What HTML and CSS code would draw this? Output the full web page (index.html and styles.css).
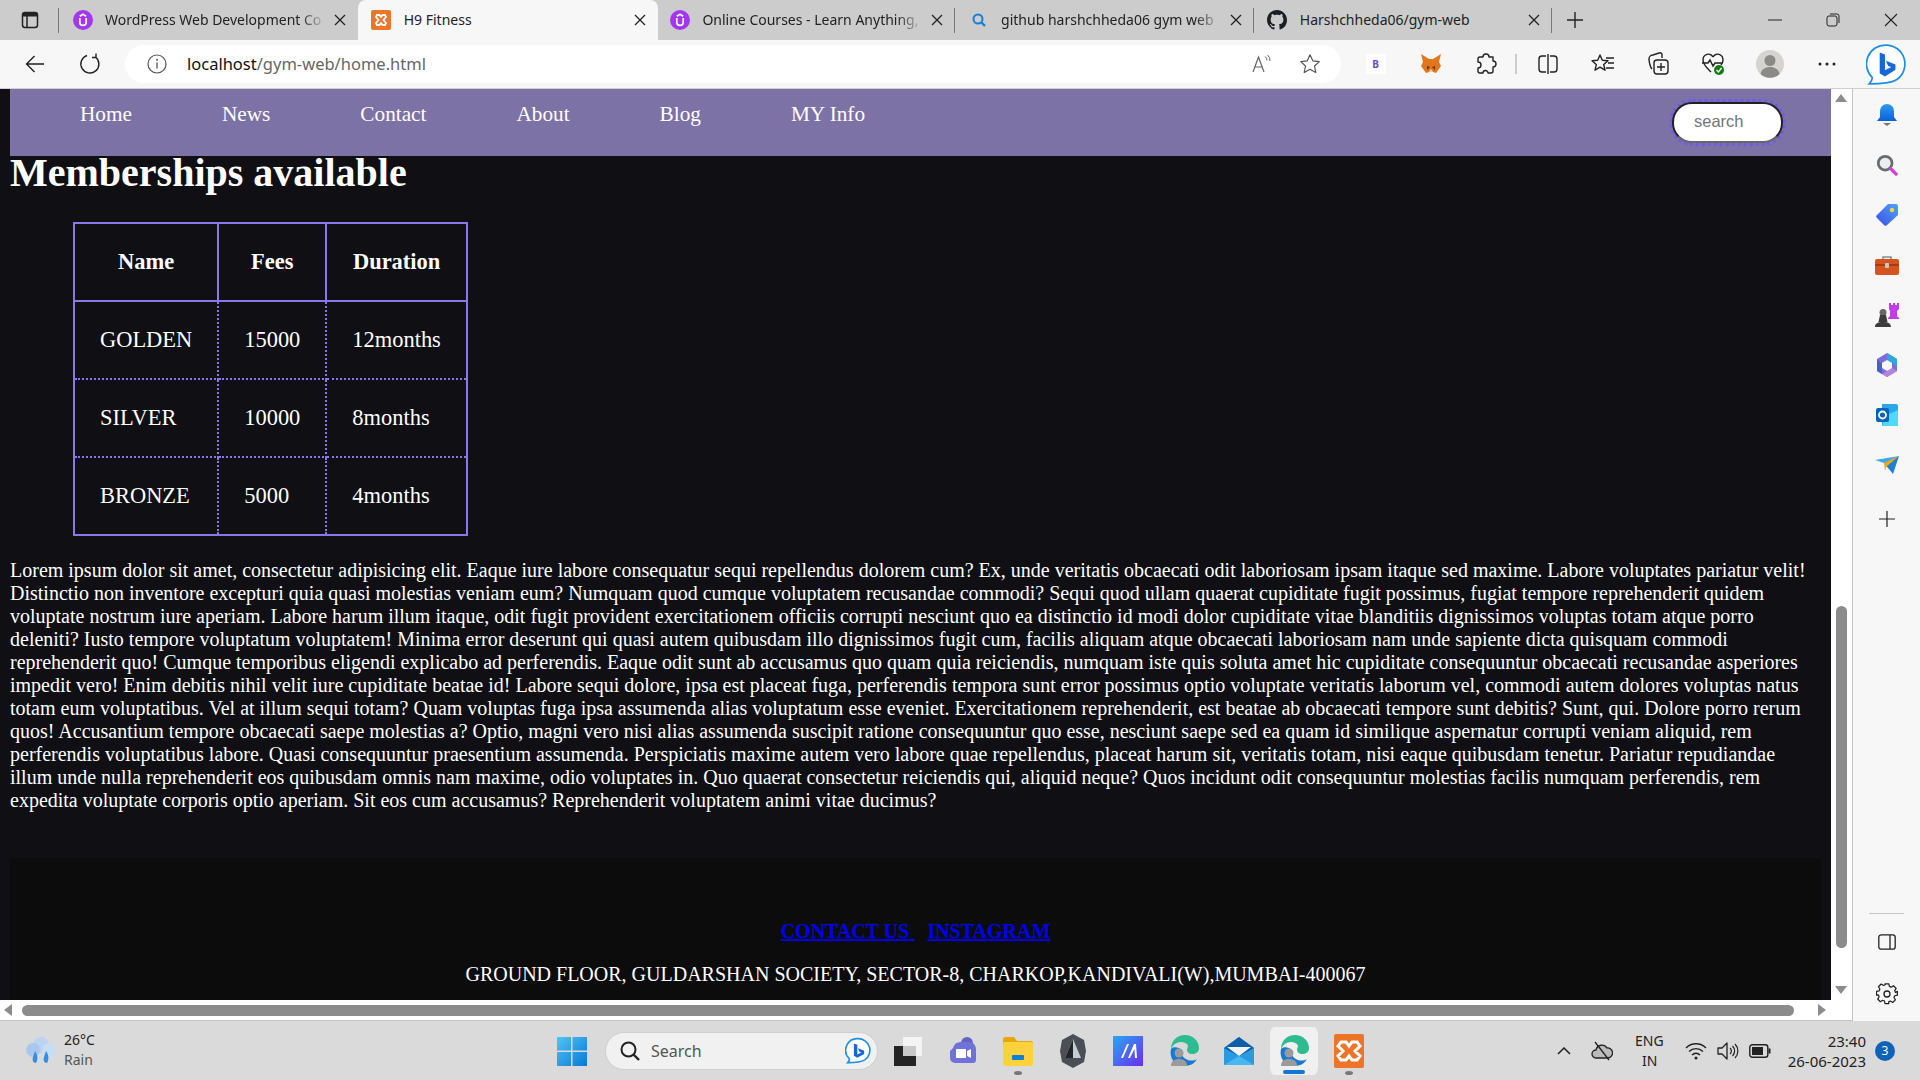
FILE: index.html
```html
<!DOCTYPE html>
<html lang="en">
<head>
    <meta charset="UTF-8">
    <title>H9 Fitness</title>
    <link rel="stylesheet" href="styles.css">
</head>
<body>
<div class="screen">

    <!-- tabs -->
    <div class="tabbar">
        <div class="tab-toggle">
            <svg width="18" height="18" viewBox="0 0 18 18"><rect x="1.500" y="1.500" width="15" height="15" rx="2.500" fill="none" stroke="#222" stroke-width="1.500"/><path d="M1.500 4a2.500 2.500 0 0 1 2.500-2.500h10a2.500 2.500 0 0 1 2.500 2.500v1.500h-15z" fill="#222"/><path d="M6 5v11" stroke="#222" stroke-width="1.500"/></svg>
        </div>
        <div class="tab">
            <svg class="favicon" viewBox="0 0 20 20"><circle cx="10" cy="10" r="10" fill="#a435f0"/><path d="M6.800 8v4.200a3.200 3.200 0 0 0 6.400 0V8M6.800 6.200L10 4.200l3.200 2" fill="none" stroke="#fff" stroke-width="1.700"/></svg>
            <span class="tab-title tab-fade">WordPress Web Development Co</span>
            <svg class="tab-close" viewBox="0 0 12 12"><path d="M1 1l10 10M11 1L1 11" stroke="#222" stroke-width="1.300"/></svg>
        </div>
        <div class="tab tab-active">
            <svg class="favicon" viewBox="0 0 20 20"><rect width="20" height="20" rx="2" fill="#ed7428"/><path d="M6 5h2.500L10 7l1.500-2H14l1 2-2.500 3 2.500 3-1 2h-2.500L10 13l-1.500 2H6l-1-2 2.500-3L5 7z" fill="none" stroke="#fff" stroke-width="1.800"/></svg>
            <span class="tab-title">H9 Fitness</span>
            <svg class="tab-close" viewBox="0 0 12 12"><path d="M1 1l10 10M11 1L1 11" stroke="#222" stroke-width="1.300"/></svg>
        </div>
        <div class="tab tab-sep">
            <svg class="favicon" viewBox="0 0 20 20"><circle cx="10" cy="10" r="10" fill="#a435f0"/><path d="M6.800 8v4.200a3.200 3.200 0 0 0 6.400 0V8M6.800 6.200L10 4.200l3.200 2" fill="none" stroke="#fff" stroke-width="1.700"/></svg>
            <span class="tab-title tab-fade">Online Courses - Learn Anything,</span>
            <svg class="tab-close" viewBox="0 0 12 12"><path d="M1 1l10 10M11 1L1 11" stroke="#222" stroke-width="1.300"/></svg>
        </div>
        <div class="tab tab-sep">
            <svg class="favicon" viewBox="0 0 20 20"><circle cx="9" cy="9" r="4.500" fill="none" stroke="#1a7fd4" stroke-width="2"/><path d="M12.500 12.500L16 16" stroke="#1a7fd4" stroke-width="2.400"/></svg>
            <span class="tab-title tab-fade">github harshchheda06 gym web</span>
            <svg class="tab-close" viewBox="0 0 12 12"><path d="M1 1l10 10M11 1L1 11" stroke="#222" stroke-width="1.300"/></svg>
        </div>
        <div class="tab tab-sep">
            <svg class="favicon" viewBox="0 0 16 16"><path fill="#1b1f23" d="M8 0C3.580 0 0 3.580 0 8c0 3.540 2.290 6.530 5.470 7.590.4.070.55-.17.55-.38 0-.19-.01-.82-.01-1.490-2.010.37-2.530-.49-2.690-.94-.09-.23-.48-.94-.82-1.130-.28-.15-.68-.52-.01-.53.63-.01 1.080.58 1.230.82.720 1.210 1.870.870 2.330.660.070-.520.280-.870.510-1.070-1.780-.200-3.640-.890-3.640-3.950 0-.870.310-1.590.820-2.150-.080-.200-.360-1.020.080-2.120 0 0 .670-.210 2.200.820.640-.180 1.320-.270 2-.270s1.360.090 2 .270c1.530-1.040 2.200-.820 2.200-.820.440 1.100.160 1.920.080 2.120.510.560.820 1.270.820 2.150 0 3.070-1.870 3.750-3.650 3.950.290.250.540.730.540 1.480 0 1.070-.010 1.930-.010 2.200 0 .210.150.460.550.380A8.010 8.010 0 0 0 16 8c0-4.420-3.580-8-8-8z"/></svg>
            <span class="tab-title">Harshchheda06/gym-web</span>
            <svg class="tab-close" viewBox="0 0 12 12"><path d="M1 1l10 10M11 1L1 11" stroke="#222" stroke-width="1.300"/></svg>
        </div>
        <div class="tab-new">
            <svg width="18" height="18" viewBox="0 0 18 18"><path d="M9 1v16M1 9h16" stroke="#222" stroke-width="1.400"/></svg>
        </div>
        <div class="win-controls">
            <svg width="14" height="14" viewBox="0 0 14 14"><path d="M0 7h14" stroke="#222" stroke-width="1"/></svg>
            <svg width="14" height="14" viewBox="0 0 14 14"><rect x="1" y="3" width="10" height="10" rx="2" fill="none" stroke="#222"/><path d="M4 1h7a2 2 0 0 1 2 2v7" fill="none" stroke="#222"/></svg>
            <svg width="14" height="14" viewBox="0 0 14 14"><path d="M1 1l12 12M13 1L1 13" stroke="#222" stroke-width="1.100"/></svg>
        </div>
    </div>

    <!-- address bar -->
    <div class="toolbar">
        <div class="nav-btn">
            <svg width="20" height="20" viewBox="0 0 20 20"><path d="M19 10H1.500M9.500 2L1.500 10l8 8" fill="none" stroke="#222" stroke-width="1.400"/></svg>
        </div>
        <div class="nav-btn">
            <svg width="22" height="22" viewBox="0 0 22 22"><path d="M16.500 4A9 9 0 1 1 8 2.500M17 .5V4.500h-4" fill="none" stroke="#222" stroke-width="1.400"/></svg>
        </div>
        <div class="address">
            <svg class="info" width="20" height="20" viewBox="0 0 20 20"><circle cx="10" cy="10" r="9" fill="none" stroke="#555" stroke-width="1.200"/><path d="M10 8.500v6" stroke="#555" stroke-width="1.300"/><circle cx="10" cy="5.800" r="1" fill="#555"/></svg>
            <span class="url"><span class="url-host">localhost</span>/gym-web/home.html</span>
            <svg class="addr-icon" width="20" height="20" viewBox="0 0 20 20"><path d="M1 18L6.500 3 12 18M3 13h7" fill="none" stroke="#666" stroke-width="1.200"/><path d="M13 2.500a5 5 0 0 1 2 4M15.500 1a7 7 0 0 1 2.500 6" fill="none" stroke="#666"/></svg>
            <svg class="addr-icon" width="22" height="22" viewBox="0 0 22 22"><path d="M11 1.800l2.800 6 6.500.8-4.800 4.400 1.300 6.500-5.800-3.300-5.800 3.300 1.300-6.500L1.700 8.600l6.500-.8z" fill="none" stroke="#555" stroke-width="1.200" stroke-linejoin="round"/></svg>
        </div>
        <div class="tool-btn tool-first"><span class="ext-b">B</span></div>
        <div class="tool-btn">
            <svg width="22" height="22" viewBox="0 0 22 22"><path d="M1 1l8 5h4l8-5-2 8 2 4-5 7-3-1h-4l-3 1-5-7 2-4z" fill="#e2761b"/><path d="M7 13l3 1-3 3zM15 13l-3 1 3 3z" fill="#5c3a1e"/><path d="M9 19h4l-2-3z" fill="#e8dccb"/></svg>
        </div>
        <div class="tool-btn">
            <svg width="22" height="22" viewBox="0 0 22 22"><path d="M8 4a3 3 0 0 1 6 0h4v4a3 3 0 0 1 0 6v4a2 2 0 0 1-2 2h-3a2.500 2.500 0 0 0-5 0H5a2 2 0 0 1-2-2v-3a3 3 0 0 0 0-6V6a2 2 0 0 1 2-2z" fill="none" stroke="#222" stroke-width="1.400" stroke-linejoin="round"/></svg>
        </div>
        <div class="tool-sep"></div>
        <div class="tool-btn">
            <svg width="22" height="22" viewBox="0 0 22 22"><path d="M9 3H5a3 3 0 0 0-3 3v10a3 3 0 0 0 3 3h4M13 3h4a3 3 0 0 1 3 3v10a3 3 0 0 1-3 3h-4M11 1v20" fill="none" stroke="#222" stroke-width="1.400"/></svg>
        </div>
        <div class="tool-btn">
            <svg width="24" height="22" viewBox="0 0 24 22"><path d="M9 2l2.300 5.300 5.700.5-4.300 3.800 1.300 5.600-5-3-5 3 1.300-5.600L1 7.800l5.700-.5z" fill="none" stroke="#222" stroke-width="1.400" stroke-linejoin="round"/><path d="M15 5h8M17 10h6M15 15h8" stroke="#222" stroke-width="1.400"/></svg>
        </div>
        <div class="tool-btn">
            <svg width="22" height="24" viewBox="0 0 22 24"><path d="M5 17C3 15 2 9 2 7a4 4 0 0 1 4-4l6-2a2 2 0 0 1 3 2v3" fill="none" stroke="#222" stroke-width="1.400"/><rect x="7" y="8" width="14" height="14" rx="3" fill="#f7f7f7" stroke="#222" stroke-width="1.400"/><path d="M14 11v8M10 15h8" stroke="#222" stroke-width="1.400"/></svg>
        </div>
        <div class="tool-btn">
            <svg width="24" height="24" viewBox="0 0 24 24"><path d="M12 5C9 0 2 2 2 8c0 5 5 9 8 12M12 5c3-5 10-3 10 3 0 2-1 4-2 5" fill="none" stroke="#222" stroke-width="1.400"/><path d="M1 11h6l2-3 3 6 2-3h7" fill="none" stroke="#222" stroke-width="1.400"/><circle cx="18" cy="18" r="5" fill="#107c10"/><path d="M15.500 18l2 2 3-4" fill="none" stroke="#fff" stroke-width="1.300"/></svg>
        </div>
        <div class="tool-btn tool-avatar">
            <svg width="28" height="28" viewBox="0 0 28 28"><circle cx="14" cy="14" r="14" fill="#d5d4d0"/><circle cx="14" cy="10.500" r="5.500" fill="#8b8a88"/><path d="M4.500 24c1-5 5-7 9.500-7s8.500 2 9.500 7a14 14 0 0 1-19 0z" fill="#8b8a88"/></svg>
        </div>
        <div class="tool-btn tool-dots">
            <svg width="18" height="4" viewBox="0 0 18 4"><circle cx="2" cy="2" r="1.500" fill="#222"/><circle cx="9" cy="2" r="1.500" fill="#222"/><circle cx="16" cy="2" r="1.500" fill="#222"/></svg>
        </div>
        <div class="bing-btn">
            <svg width="40" height="42" viewBox="0 0 38 40"><path d="M19 1a18 18 0 0 1 10 33c-5 3-13 4-26 4 2-2 3-4 3-6A18 18 0 0 1 19 1z" fill="#fff" stroke="#1b8fe8" stroke-width="1.600"/><path d="M13 8l5 2v15l6-3-3-1-2-5 9 3.500v5L18 31l-5-3z" fill="#1668d8"/></svg>
        </div>
    </div>

    <div class="middle">
        <div class="viewport">
            <div class="viewport-top">
                <!-- the page itself -->
                <div class="page">
                    <nav class="site-nav">
                        <ul class="site-links">
                            <li><a href="#">Home</a></li>
                            <li><a href="#">News</a></li>
                            <li><a href="#">Contact</a></li>
                            <li><a href="#">About</a></li>
                            <li><a href="#">Blog</a></li>
                            <li><a href="#">MY Info</a></li>
                        </ul>
                        <div class="search-ring">
                            <input class="site-search" type="text" placeholder="search">
                        </div>
                    </nav>

                    <h1 class="page-title">Memberships available</h1>

                    <table class="plans">
                        <tr>
                            <th>Name</th>
                            <th>Fees</th>
                            <th>Duration</th>
                        </tr>
                        <tr>
                            <td>GOLDEN</td>
                            <td>15000</td>
                            <td>12months</td>
                        </tr>
                        <tr>
                            <td>SILVER</td>
                            <td>10000</td>
                            <td>8months</td>
                        </tr>
                        <tr>
                            <td>BRONZE</td>
                            <td>5000</td>
                            <td>4months</td>
                        </tr>
                    </table>

                    <p class="lorem">Lorem ipsum dolor sit amet, consectetur adipisicing elit. Eaque iure labore consequatur sequi repellendus dolorem cum? Ex, unde veritatis obcaecati odit laboriosam ipsam itaque sed maxime. Labore voluptates pariatur velit! Distinctio non inventore excepturi quia quasi molestias veniam eum? Numquam quod cumque voluptatem recusandae commodi? Sequi quod ullam quaerat cupiditate fugit possimus, fugiat tempore reprehenderit quidem voluptate nostrum iure aperiam. Labore harum illum itaque, odit fugit provident exercitationem officiis corrupti nesciunt quo ea distinctio id modi dolor cupiditate vitae blanditiis dignissimos voluptas totam atque porro deleniti? Iusto tempore voluptatum voluptatem! Minima error deserunt qui quasi autem quibusdam illo dignissimos fugit cum, facilis aliquam atque obcaecati laboriosam nam unde sapiente dicta quisquam commodi reprehenderit quo! Cumque temporibus eligendi explicabo ad perferendis. Eaque odit sunt ab accusamus quo quam quia reiciendis, numquam iste quis soluta amet hic cupiditate consequuntur obcaecati recusandae asperiores impedit vero! Enim debitis nihil velit iure cupiditate beatae id! Labore sequi dolore, ipsa est placeat fuga, perferendis tempora sunt error possimus optio voluptate veritatis laborum vel, commodi autem dolores voluptas natus totam eum voluptatibus. Vel at illum sequi totam? Quam voluptas fuga ipsa assumenda alias voluptatum esse eveniet. Exercitationem reprehenderit, est beatae ab obcaecati tempore sunt debitis? Sunt, qui. Dolore porro rerum quos! Accusantium tempore obcaecati saepe molestias a? Optio, magni vero nisi alias assumenda suscipit ratione consequuntur quo esse, nesciunt saepe sed ea quam id similique aspernatur corrupti veniam aliquid, rem perferendis voluptatibus labore. Quasi consequuntur praesentium assumenda. Perspiciatis maxime autem vero labore quae repellendus, placeat harum sit, veritatis totam, nisi eaque quibusdam tenetur. Pariatur repudiandae illum unde nulla reprehenderit eos quibusdam omnis nam maxime, odio voluptates in. Quo quaerat consectetur reiciendis qui, aliquid neque? Quos incidunt odit consequuntur molestias facilis numquam perferendis, rem expedita voluptate corporis optio aperiam. Sit eos cum accusamus? Reprehenderit voluptatem animi vitae ducimus?</p>

                    <footer class="site-footer">
                        <div class="footer-links"><a href="#">CONTACT US </a> <a class="footer-link-next" href="#">INSTAGRAM</a></div>
                        <div class="footer-address">GROUND FLOOR, GULDARSHAN SOCIETY, SECTOR-8, CHARKOP,KANDIVALI(W),MUMBAI-400067</div>
                    </footer>
                </div>

                <div class="vscroll">
                    <span class="arrow arrow-up"></span>
                    <span class="vthumb"></span>
                    <span class="arrow arrow-down"></span>
                </div>
            </div>
            <div class="hscroll">
                <span class="arrow arrow-left"></span>
                <span class="hthumb"></span>
                <span class="arrow arrow-right"></span>
            </div>
        </div>

        <!-- edge sidebar -->
        <aside class="sidebar">
            <div class="side-item">
                <svg width="22" height="24" viewBox="0 0 22 24"><defs><linearGradient id="bell" x1="0" y1="0" x2="0" y2="1"><stop offset="0" stop-color="#2d9bf0"/><stop offset="1" stop-color="#0f5fd8"/></linearGradient></defs><path d="M11 1a7 7 0 0 1 7 7v6l3 4H1l3-4V8a7 7 0 0 1 7-7z" fill="url(#bell)"/><path d="M7 20h8l-4 3z" fill="#777"/></svg>
            </div>
            <div class="side-item">
                <svg width="22" height="22" viewBox="0 0 24 24"><circle cx="10" cy="10" r="7.500" fill="#e8eef2" stroke="#6b6b6b" stroke-width="3"/><path d="M16 16l6 6" stroke="#d83be0" stroke-width="3.500" stroke-linecap="round"/></svg>
            </div>
            <div class="side-item">
                <svg width="22" height="22" viewBox="0 0 22 22"><defs><linearGradient id="tag" x1="0" y1="1" x2="1" y2="0"><stop offset="0" stop-color="#3b4fe8"/><stop offset="1" stop-color="#4fa3f7"/></linearGradient></defs><path d="M12 0h8a2 2 0 0 1 2 2v9L11 21a2 2 0 0 1-3 0L1 14a2 2 0 0 1 0-3z" fill="url(#tag)"/><circle cx="16" cy="6" r="2.200" fill="#f9d43a"/></svg>
            </div>
            <div class="side-item">
                <svg width="24" height="20" viewBox="0 0 24 20"><path d="M8 5V2h8v3" fill="none" stroke="#8b8b8b" stroke-width="1.600"/><rect x="0" y="4" width="24" height="16" rx="2" fill="#d5541f"/><path d="M0 9h24v2H0z" fill="#a63d12"/><rect x="10" y="8" width="4" height="5" rx="1" fill="#c8c8c8"/></svg>
            </div>
            <div class="side-item">
                <svg width="24" height="24" viewBox="0 0 24 24"><path d="M14 0h2v2h2V0h2v2h2V0h2v6l-2 2v5l2 2v1H13v-1l2-2V8l-1-2z" fill="#c43de8"/><circle cx="8" cy="9.500" r="3.500" fill="#666"/><path d="M5 12h6l1.500 7h-9zM0 24c0-3 2-5 8-5s8 2 8 5z" fill="#3c3c3c"/></svg>
            </div>
            <div class="side-item">
                <svg width="22" height="24" viewBox="0 0 22 24"><path d="M11 0l10 6v12l-10 6L1 18V6z" fill="#7b6ed8"/><path d="M11 0l10 6v7l-5-3-5-3z" fill="#2ea8e0"/><path d="M1 6v12l5 3V11z" fill="#4a5fc8"/><path d="M6 21l5 3 10-6-5-3z" fill="#b583de"/><path d="M11 7l5 3v5l-5 3-5-3v-5z" fill="#f7f7f7"/></svg>
            </div>
            <div class="side-item">
                <svg width="22" height="22" viewBox="0 0 22 22"><path d="M6 0h14a2 2 0 0 1 2 2v18a2 2 0 0 1-2 2H6z" fill="#28a8ea"/><path d="M9 12l13-6v16H6z" fill="#50d9ff"/><rect x="0" y="4" width="13" height="14" rx="2" fill="#0364b8"/><circle cx="6.500" cy="11" r="3.500" fill="none" stroke="#fff" stroke-width="1.800"/></svg>
            </div>
            <div class="side-item">
                <svg width="24" height="18" viewBox="0 0 24 18"><path d="M0 4l24-4-15 7z" fill="#39a8ec"/><path d="M24 0l-6 18-9-11z" fill="#1c7ed6"/><path d="M9 7l15-7-13 11-1 4z" fill="#f3a712"/></svg>
            </div>
            <div class="side-item side-plus">
                <svg width="16" height="16" viewBox="0 0 16 16"><path d="M8 0v16M0 8h16" stroke="#222" stroke-width="1.200"/></svg>
            </div>
            <div class="side-bottom">
                <div class="side-line"></div>
                <div class="side-item">
                    <svg width="18" height="16" viewBox="0 0 18 16"><rect x=".8" y=".8" width="16.400" height="14.400" rx="2.500" fill="none" stroke="#222" stroke-width="1.300"/><path d="M12 1v14" stroke="#222" stroke-width="1.300"/></svg>
                </div>
                <div class="side-item">
                    <svg width="22" height="22" viewBox="0 0 22 22"><path d="M9 1h4l.6 2.800 1.900.8 2.400-1.500 2.800 2.800-1.500 2.400.8 1.900L22 9v4l-2.800.6-.8 1.900 1.500 2.400-2.800 2.800-2.400-1.500-1.900.8L13 22H9l-.6-2.800-1.900-.8-2.400 1.500-2.800-2.800 1.500-2.400-.8-1.900L0 13V9l2.800-.6.8-1.900-1.500-2.400L4.900 1.300l2.400 1.500 1.900-.8z" transform="scale(.95) translate(.5 -.2)" fill="none" stroke="#222" stroke-width="1.300" stroke-linejoin="round"/><circle cx="11" cy="11" r="3" fill="none" stroke="#222" stroke-width="1.300"/></svg>
                </div>
            </div>
        </aside>
    </div>

    <!-- windows taskbar -->
    <div class="taskbar">
        <div class="weather">
            <svg width="34" height="30" viewBox="0 0 34 30"><circle cx="17" cy="9" r="8" fill="#b9d3f0"/><circle cx="9" cy="14" r="7" fill="#a9c8ee"/><circle cx="25" cy="14" r="7" fill="#c8dcf2"/><path d="M11 15c3 4 3 9 1 12-3 0-4-3-3-6zM22 15c3 4 3 9 1 12-3 0-4-3-3-6z" fill="#2e8fea"/></svg>
            <div class="weather-text">
                <span>26°C</span>
                <span class="weather-sub">Rain</span>
            </div>
        </div>

        <div class="task-start">
            <svg width="30" height="30" viewBox="0 0 30 30"><defs><linearGradient id="win" x1="0" y1="0" x2="1" y2="1"><stop offset="0" stop-color="#4fc4f7"/><stop offset="1" stop-color="#0a78d4"/></linearGradient></defs><path d="M0 1h14v13.500H0zM15.500 1H30v13.500H15.500zM0 16h14v14H0zM15.500 16H30v14H15.500z" fill="url(#win)"/></svg>
        </div>

        <div class="task-search">
            <svg width="22" height="22" viewBox="0 0 22 22"><circle cx="9.500" cy="9.500" r="7" fill="none" stroke="#222" stroke-width="2"/><path d="M14.500 14.500L20 20" stroke="#222" stroke-width="2.400"/></svg>
            <span class="task-search-text">Search</span>
            <svg width="26" height="28" viewBox="0 0 38 40"><path d="M19 2a17 17 0 0 1 10 31c-5 3-13 4-25 4 2-2 3-4 2-6A17 17 0 0 1 19 2z" fill="#fff" stroke="#1b8fe8" stroke-width="2.400"/><path d="M13 9l5 2v14l6-3-3-1-2-5 9 3.500v5L18 30l-5-3z" fill="#1668d8"/></svg>
        </div>

        <div class="task-apps">
            <div class="task-app">
                <svg width="30" height="30" viewBox="0 0 30 30"><rect x="10" y="1" width="19" height="19" fill="#f4f4f4"/><rect x="1" y="10" width="22" height="20" fill="#242424"/><rect x="10" y="10" width="13" height="10" fill="#c9c9c9"/></svg>
            </div>
            <div class="task-app">
                <svg width="32" height="30" viewBox="0 0 32 30"><circle cx="20" cy="7" r="6" fill="#6264c8"/><path d="M6 12a8 8 0 0 1 8-6h8a7 7 0 0 1 7 7v11a3 3 0 0 1-3 3H8a5 5 0 0 1-5-5v-7z" fill="#6f72d8"/><path d="M9 13h10v9H9zM20 15l4-2v9l-4-2z" fill="#fff"/></svg>
            </div>
            <div class="task-app has-dot">
                <svg width="30" height="30" viewBox="0 0 30 30"><path d="M0 3a2 2 0 0 1 2-2h9l3 4h14a2 2 0 0 1 2 2v3H0z" fill="#e8a80c"/><rect y="6" width="30" height="24" rx="2" fill="#ffd23c"/><rect x="9" y="19" width="12" height="5" rx="1" fill="#0e7ed6"/></svg>
            </div>
            <div class="task-app">
                <svg width="26" height="34" viewBox="0 0 26 34"><path d="M13 0l11 6 2 11-2 11-11 6-11-6L0 17 2 6z" fill="#4a4f55"/><path d="M13 5L5 24h16z" fill="#c7ccd1"/><path d="M13 5v19H5z" fill="#22262a"/></svg>
            </div>
            <div class="task-app">
                <svg width="30" height="30" viewBox="0 0 30 30"><defs><linearGradient id="mx" x1="0" y1="0" x2="1" y2="1"><stop offset="0" stop-color="#2aa8ee"/><stop offset="1" stop-color="#6a2cf2"/></linearGradient></defs><rect width="30" height="30" fill="url(#mx)"/><path d="M8 22L14 8h2l-6 14zM15 22l6-14h2l1 14h-2l-.6-9L17 22z" fill="#fff"/></svg>
            </div>
            <div class="task-app">
                <svg width="32" height="32" viewBox="0 0 32 32"><use href="#edgeProfile"/></svg>
            </div>
            <div class="task-app">
                <svg width="30" height="28" viewBox="0 0 30 28"><path d="M15 0l15 11v17H0V11z" fill="#2a9be0"/><path d="M15 0l15 11-15 8L0 11z" fill="#0b5fa8"/><path d="M3 10h24l-12 9z" fill="#f2f2f2"/><path d="M0 28l15-9 15 9z" fill="#49b8f0"/></svg>
            </div>
            <div class="task-app task-active">
                <svg width="32" height="32" viewBox="0 0 32 32"><defs><g id="edgeProfile"><path d="M3 14C3 6 9 0 17 0c8 0 14 6 14 13 0 4-3 6-7 6-3 0-5-2-5-4 0-2 1-3 1-4-1-3-4-4-7-4-5 0-8 3-10 7z" fill="#2dbb8f"/><path d="M3 14c-2 8 3 17 13 17 6 0 10-2 13-7-3 2-8 2-11 0-4-2-5-6-4-9-3-3-9-4-11-1z" fill="#1679d4"/><circle cx="11" cy="18" r="4.500" fill="#9b9b9b"/><path d="M3 31c0-5 3-7 8-7s8 2 8 7z" fill="#9b9b9b"/></g></defs><use href="#edgeProfile"/></svg>
                <span class="task-underline"></span>
            </div>
            <div class="task-app has-dot">
                <svg width="30" height="34" viewBox="0 0 30 34"><rect width="30" height="34" rx="2" fill="#ed7428"/><path d="M7 8h5l3 4 3-4h5l3 4-5 5 5 5-3 4h-5l-3-4-3 4H7l-3-4 5-5-5-5z" fill="none" stroke="#fff" stroke-width="3"/></svg>
            </div>
        </div>

        <div class="tray">
            <svg class="tray-chevron" width="14" height="8" viewBox="0 0 14 8"><path d="M1 7l6-6 6 6" fill="none" stroke="#222" stroke-width="1.500"/></svg>
            <svg class="tray-cloud" width="22" height="22" viewBox="0 0 22 22"><path d="M5 18a4 4 0 0 1 0-8 6 6 0 0 1 11-2 5 5 0 0 1 1 10z" fill="#bbb" stroke="#222" stroke-width="1.300"/><path d="M4 2l14 18" stroke="#222" stroke-width="1.300"/></svg>
            <div class="tray-lang"><span>ENG</span><span>IN</span></div>
            <svg class="tray-wifi" width="22" height="20" viewBox="0 0 22 20"><path d="M1 7a14 14 0 0 1 20 0M4 10.500a10 10 0 0 1 14 0M7 14a5.500 5.500 0 0 1 8 0" fill="none" stroke="#222" stroke-width="1.400"/><circle cx="11" cy="17" r="1.500" fill="#222"/></svg>
            <svg class="tray-vol" width="22" height="20" viewBox="0 0 22 20"><path d="M1 7h4l5-5v16l-5-5H1z" fill="none" stroke="#222" stroke-width="1.300" stroke-linejoin="round"/><path d="M13 7a4 4 0 0 1 0 6M15.500 5a7 7 0 0 1 0 10M18 3a10 10 0 0 1 0 14" fill="none" stroke="#222" stroke-width="1.200"/></svg>
            <svg class="tray-batt" width="22" height="14" viewBox="0 0 22 14"><rect x=".8" y=".8" width="18" height="12.400" rx="2.500" fill="none" stroke="#222" stroke-width="1.400"/><rect x="3" y="3" width="11" height="8" fill="#222"/><path d="M20.500 4.500v5" stroke="#222" stroke-width="2"/></svg>
            <div class="tray-clock"><span>23:40</span><span>26-06-2023</span></div>
            <span class="tray-badge">3</span>
        </div>
    </div>
</div>
</body>
</html>
```

FILE: styles.css
```css
html, body {
    margin: 0;
    padding: 0;
    height: 100%;
    overflow: hidden;
}

body {
    font-family: "Noto Sans", "Open Sans", sans-serif;
    color: #222;
}

.screen {
    width: 1920px;
    height: 1080px;
    display: flex;
    flex-direction: column;
    overflow: hidden;
}

/* Tabs */
.tabbar {
    height: 40px;
    flex: none;
    background: #cccccc;
    display: flex;
    align-items: stretch;
    font-size: 14px;
}

.tab-toggle {
    width: 59px;
    flex: none;
    display: flex;
    align-items: center;
    padding-left: 21px;
    box-sizing: border-box;
    position: relative;
}

.tab-toggle::after,
.tab-sep::after {
    content: "";
    position: absolute;
    right: 0;
    top: 8px;
    height: 25px;
    width: 1px;
    background: #777;
}

.tab {
    width: 298.7px;
    flex: none;
    box-sizing: border-box;
    padding: 0 12px 0 13.500px;
    display: flex;
    align-items: center;
    position: relative;
}

.tab-active {
    width: 300px;
    margin-right: -1.300px;
    background: #f7f7f7;
    border-radius: 8px 8px 0 0;
}

.favicon {
    width: 20px;
    height: 20px;
    flex: none;
    margin-right: 12.500px;
}

.tab-title {
    flex: 1;
    min-width: 0;
    margin-top: -2px;
    white-space: nowrap;
}

.tab-fade {
    -webkit-mask-image: linear-gradient(to right, #000 88%, transparent 100%);
    mask-image: linear-gradient(to right, #000 88%, transparent 100%);
}

.tab-close {
    width: 12px;
    height: 12px;
    margin-left: 8px;
    flex: none;
}

.tab-new {
    width: 46px;
    display: flex;
    align-items: center;
    justify-content: center;
}

.win-controls {
    margin-left: auto;
    display: flex;
    align-items: center;
    gap: 44px;
    padding-right: 22px;
}

/* Address bar */
.toolbar {
    height: 48px;
    flex: none;
    background: #f7f7f7;
    border-bottom: 1px solid #cfcfcf;
    display: flex;
    align-items: center;
    position: relative;
    z-index: 2;
}

.nav-btn {
    width: 55px;
    flex: none;
    display: flex;
    justify-content: center;
}

.nav-btn:first-child {
    margin-left: 7px;
}

.address {
    width: 1216px;
    height: 38px;
    margin-left: 8px;
    background: #fff;
    border-radius: 19px;
    flex: none;
    display: flex;
    align-items: center;
    padding-left: 22px;
    padding-right: 20px;
    box-sizing: border-box;
}

.url {
    margin-left: 20px;
    margin-top: -2px;
    font-size: 16.5px;
    color: #666;
    flex: 1;
}

.url-host {
    color: #111;
}

.addr-icon {
    margin-left: 27px;
}

.tool-btn {
    width: 55px;
    flex: none;
    display: flex;
    align-items: center;
    justify-content: center;
}

.tool-first {
    margin-left: 7px;
}

.tool-avatar {
    margin-left: 2px;
}

.tool-dots {
    margin-left: 2.500px;
}

.ext-b {
    width: 20px;
    height: 20px;
    background: #fff;
    color: #5a4fc8;
    font-size: 10px;
    font-weight: bold;
    text-align: center;
    line-height: 20px;
}

.tool-sep {
    width: 2px;
    height: 20px;
    background: #ccc;
    margin: 0 3px 0 2px;
    flex: none;
}

.bing-btn {
    margin-left: 11px;
    display: flex;
    margin-top: 2px;
}

/* Browser content */
.middle {
    flex: 1;
    display: flex;
    min-height: 0;
}

.viewport {
    width: 1852px;
    flex: none;
    display: flex;
    flex-direction: column;
    border-right: 1px solid #c4c4c4;
}

.viewport-top {
    flex: 1;
    display: flex;
    min-height: 0;
}

.page {
    width: 1831px;
    flex: none;
    box-sizing: border-box;
    padding: 0 10px 0 10px;
    background: #0f0f14;
    color: #fff;
    font-family: "Liberation Serif", serif;
    overflow: hidden;
}

.site-nav {
    width: 1821px;
    height: 67px;
    background: #7d72a6;
    display: flex;
    justify-content: space-between;
    align-items: flex-start;
    box-sizing: border-box;
    padding-right: 45px;
}

.site-links {
    list-style: none;
    margin: 13px 0 0;
    padding: 0 0 0 70px;
    display: flex;
    gap: 90px;
    font-size: 21.25px;
}

.site-links a {
    color: #fff;
    text-decoration: none;
}

.search-ring {
    margin-top: 10px;
    border: 3px dotted #6c5ce7;
    border-radius: 24px;
    display: flex;
}

.site-search {
    width: 111px;
    height: 41px;
    box-sizing: border-box;
    border: 2px solid #222;
    border-bottom-color: #666;
    border-radius: 20px;
    outline: none;
    background: #fff;
    padding: 0 0 2px 20px;
    font-family: "Liberation Sans", sans-serif;
    font-size: 16.5px;
}

.site-search::placeholder {
    color: #757575;
}

.page-title {
    font-size: 40px;
    line-height: 34px;
    margin: 0;
}

.plans {
    border-collapse: collapse;
    border: 2px solid #8a78ea;
    margin: 32px 0 0 63px;
    font-size: 22.45px;
}

.plans th,
.plans td {
    padding: 25px;
}

.plans th {
    border: 2px solid #8a78ea;
}

.plans td {
    border: 2px dotted #8a78ea;
    text-align: left;
}

.lorem {
    margin: 23px 0 0;
    font-size: 20px;
    line-height: 23px;
}

.site-footer {
    width: 1811px;
    height: 142px;
    margin-top: 46px;
    background: #0c0c0c;
    text-align: center;
    font-size: 20px;
    padding-top: 62px;
    box-sizing: border-box;
}

.footer-links {
    font-weight: bold;
}

.footer-links a {
    color: #0000ee;
}

.footer-links .footer-link-next {
    margin-left: 13px;
}

.footer-address {
    margin-top: 20px;
}

/* Scrollbars */
.vscroll {
    flex: 1;
    background: #fff;
    position: relative;
}

.vthumb {
    position: absolute;
    left: 5px;
    top: 517px;
    width: 11px;
    height: 342px;
    border-radius: 6px;
    background: #8b8b8b;
}

.hscroll {
    height: 20px;
    flex: none;
    background: #fff;
    border-bottom: 1px solid #c4c4c4;
    position: relative;
}

.hthumb {
    position: absolute;
    left: 22px;
    top: 5px;
    width: 1772px;
    height: 11px;
    border-radius: 6px;
    background: #8b8b8b;
}

.arrow {
    position: absolute;
    width: 0;
    height: 0;
    border: 6px solid transparent;
}

.arrow-up {
    left: 4px;
    top: 5px;
    border-bottom: 8px solid #8b8b8b;
    border-top: 0;
}

.arrow-down {
    left: 4px;
    bottom: 6px;
    border-top: 8px solid #8b8b8b;
    border-bottom: 0;
}

.arrow-left {
    left: 4px;
    top: 4px;
    border-right: 8px solid #8b8b8b;
    border-left: 0;
}

.arrow-right {
    left: 1818px;
    top: 4px;
    border-left: 8px solid #8b8b8b;
    border-right: 0;
}

/* Sidebar */
.sidebar {
    flex: 1;
    background: #f7f7f7;
    display: flex;
    flex-direction: column;
    padding-top: 1px;
}

.side-item {
    height: 50px;
    flex: none;
    display: flex;
    align-items: center;
    justify-content: center;
}

.side-plus {
    margin-top: 4px;
}

.side-bottom {
    margin-top: auto;
    padding-bottom: 2px;
}

.side-line {
    height: 1px;
    background: #c4c4c4;
    margin: 0 16px 3px;
}

.side-bottom .side-item {
    margin-top: 2px;
}

/* Taskbar */
.taskbar {
    height: 59px;
    flex: none;
    background: #dadada;
    display: flex;
    align-items: center;
    position: relative;
}

.weather {
    width: 557px;
    flex: none;
    box-sizing: border-box;
    padding-left: 24px;
    display: flex;
    align-items: center;
    gap: 6px;
}

.weather-text {
    display: flex;
    flex-direction: column;
    font-size: 14px;
    line-height: 20px;
    margin-top: -2px;
}

.weather-sub {
    color: #555;
}

.task-start {
    display: flex;
    width: 48px;
    flex: none;
}

.task-search {
    width: 273px;
    height: 38px;
    flex: none;
    box-sizing: border-box;
    background: #f1f1f1;
    border: 1px solid #cfcfcf;
    border-radius: 19px;
    display: flex;
    align-items: center;
    padding: 0 6px 0 13px;
}

.task-search-text {
    flex: 1;
    margin-left: 10px;
    font-size: 16px;
    color: #555;
}

.task-apps {
    display: flex;
    margin-left: 2px;
    flex: none;
}

.task-app {
    width: 55.2px;
    height: 48px;
    flex: none;
    display: flex;
    align-items: center;
    justify-content: center;
    position: relative;
}

.has-dot::after {
    content: "";
    position: absolute;
    left: 50%;
    margin-left: -4px;
    bottom: 0;
    width: 8px;
    height: 4px;
    border-radius: 50%;
    background: #777;
}

.task-active {
    box-sizing: border-box;
    padding: 0 3.600px;
    background: #f0f0f0;
    background-clip: content-box;
    border-radius: 8px;
}

.task-underline {
    position: absolute;
    left: 17px;
    right: 17px;
    bottom: 1px;
    height: 4px;
    border-radius: 2px;
    background: #0f78d4;
}

.tray {
    position: absolute;
    right: 0;
    top: 0;
    height: 59px;
    width: 376px;
    display: flex;
    align-items: center;
    font-size: 14px;
}

.tray-chevron {
    margin-left: 13px;
}

.tray-cloud {
    margin-left: 20px;
}

.tray-lang {
    display: flex;
    flex-direction: column;
    align-items: flex-start;
    line-height: 20px;
    margin-left: 22px;
    width: 40px;
}

.tray-lang span:last-child {
    padding-left: 7px;
}

.tray-wifi {
    margin-left: 10px;
}

.tray-vol {
    margin-left: 9.500px;
}

.tray-batt {
    margin-left: 10px;
}

.tray-clock {
    display: flex;
    flex-direction: column;
    align-items: flex-end;
    font-size: 15px;
    line-height: 20px;
    margin-left: 14.500px;
    width: 81px;
}

.tray-badge {
    width: 20px;
    height: 20px;
    border-radius: 50%;
    background: #0f62b8;
    color: #fff;
    font-size: 12px;
    text-align: center;
    line-height: 20px;
    margin-left: 9px;
}
```
